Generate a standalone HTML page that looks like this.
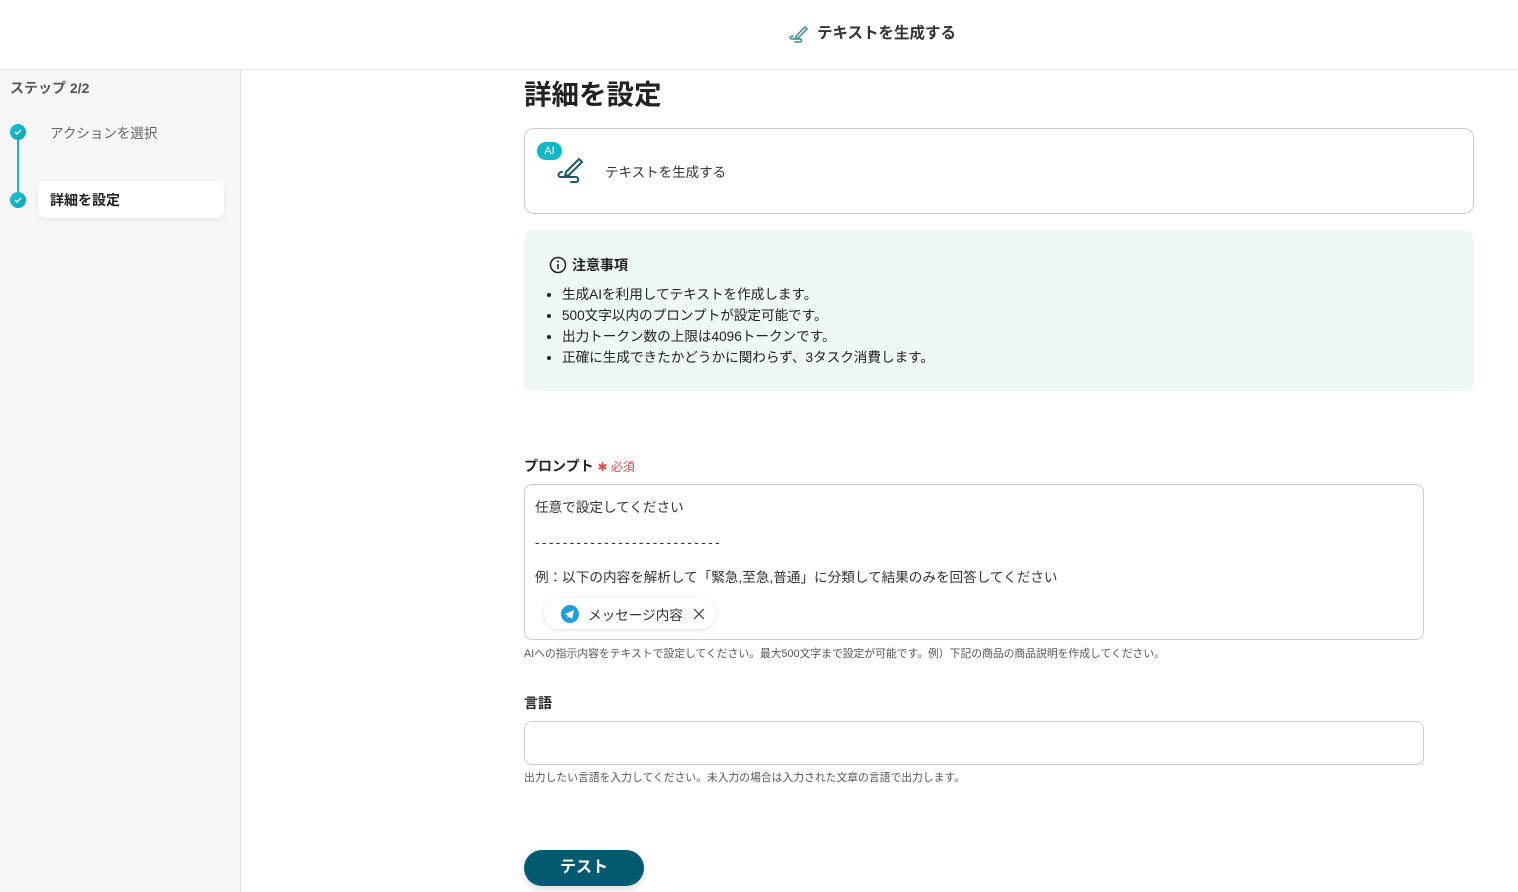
<!DOCTYPE html>
<html><head><meta charset="utf-8">
<style>
*{box-sizing:border-box;margin:0;padding:0}
body{width:1518px;height:892px;overflow:hidden;background:#fff;font-family:"Liberation Sans","Noto Sans CJK JP",sans-serif;color:#222;position:relative}
.hdr{position:absolute;left:0;top:0;width:1518px;height:70px;border-bottom:1px solid #e0e0e0;background:#fff}
.hdr .t{position:absolute;left:817px;top:21px;font-size:15.5px;font-weight:bold;color:#333}
.side{position:absolute;left:0;top:70px;width:241px;height:822px;background:#f7f7f7;border-right:1px solid #e0e0e0}
.abs{position:absolute}
.dot{position:absolute;width:16px;height:16px;border-radius:50%;background:linear-gradient(135deg,#1cc4d6,#07a5a8)}
.small{font-size:10.8px;color:#555}
</style></head><body>
<div class="hdr">
<svg class="abs" style="left:786px;top:21px" width="24" height="24" viewBox="0 0 24 24" fill="none" stroke="#3a8aa0" stroke-width="1.5" stroke-linecap="round"><path d="M10 15l9-9 2 2-9 9-3 1z"/><path d="M7 15c-3 0-4 3-1 3h8c2 0 2 3 0 3H9"/></svg>
<div class="t">テキストを生成する</div>
</div>
<div class="side">
<div class="abs" style="left:10px;top:8px;font-size:14px;font-weight:bold;color:#555">ステップ 2/2</div>
<div class="abs" style="left:17px;top:62px;width:2px;height:66px;background:#11b5c4"></div>
<div class="dot" style="left:10px;top:54px"><svg width="16" height="16"><path d="M5 8l2 2 4-4" stroke="#fff" stroke-width="1.5" fill="none"/></svg></div>
<div class="dot" style="left:10px;top:122px"><svg width="16" height="16"><path d="M5 8l2 2 4-4" stroke="#fff" stroke-width="1.5" fill="none"/></svg></div>
<div class="abs" style="left:50px;top:52px;font-size:13.5px;color:#666">アクションを選択</div>
<div class="abs" style="left:38px;top:111px;width:186px;height:37px;background:#fff;border-radius:8px;box-shadow:0 2px 6px rgba(0,0,0,.06)"></div>
<div class="abs" style="left:50px;top:120px;font-size:14px;font-weight:bold;color:#222">詳細を設定</div>
</div>
<div class="abs" style="left:524px;top:72px;font-size:27.5px;font-weight:bold;color:#222">詳細を設定</div>
<div class="abs" style="left:524px;top:128px;width:950px;height:86px;border:1px solid #ccc;border-radius:10px"></div>
<div class="abs" style="left:537px;top:142px;width:25px;height:18px;border-radius:9px;background:#12b8c8;color:#fff;font-size:11px;text-align:center;line-height:18px">AI</div>
<svg class="abs" style="left:550px;top:152px" width="40" height="40" viewBox="0 0 40 40" fill="none" stroke="#1a5a70" stroke-width="2" stroke-linecap="round"><path d="M16 20l13-13 3 3-13 13-4 1z"/><path d="M12 20c-4 0-5 5-1 5h15c3 0 3 5 0 5h-5"/></svg>
<div class="abs" style="left:605px;top:161px;font-size:13.5px;color:#333">テキストを生成する</div>
<div class="abs" style="left:524px;top:230px;width:950px;height:161px;background:#eff7f7;border-radius:10px"></div>
<svg class="abs" style="left:549px;top:256px" width="18" height="18" viewBox="0 0 18 18"><circle cx="9" cy="9" r="7.5" fill="none" stroke="#222" stroke-width="1.5"/><rect x="8.2" y="8" width="1.6" height="5" fill="#222"/><circle cx="9" cy="5.5" r="1" fill="#222"/></svg>
<div class="abs" style="left:572px;top:255px;font-size:14px;font-weight:bold">注意事項</div>
<ul class="abs" style="left:562px;top:284px;font-size:13.6px;line-height:21px;color:#222;list-style:disc">
<li>生成AIを利用してテキストを作成します。</li>
<li>500文字以内のプロンプトが設定可能です。</li>
<li>出力トークン数の上限は4096トークンです。</li>
<li>正確に生成できたかどうかに関わらず、3タスク消費します。</li>
</ul>
<div class="abs" style="left:524px;top:456px;font-size:14px;font-weight:bold">プロンプト <span style="color:#e5484d;font-weight:normal;font-size:12px">✱ 必須</span></div>
<div class="abs" style="left:524px;top:484px;width:900px;height:156px;border:1px solid #ccc;border-radius:8px"></div>
<div class="abs" style="left:535px;top:490px;font-size:13.6px;color:#333;line-height:35px">任意で設定してください<br><span style="letter-spacing:2.4px">---------------------------</span><br>例：以下の内容を解析して「緊急,至急,普通」に分類して結果のみを回答してください</div>
<div class="abs" style="left:544px;top:598px;width:172px;height:31px;border-radius:16px;background:#fff;box-shadow:0 1px 5px rgba(0,0,0,.12)"></div>
<svg class="abs" style="left:561px;top:605px" width="18" height="18" viewBox="0 0 18 18"><circle cx="9" cy="9" r="9" fill="#229ed9"/><path d="M4 9l9-4-2 9-3-2.5-1.5 1.5v-2.5z" fill="#fff"/></svg>
<div class="abs" style="left:588px;top:604px;font-size:13.6px;color:#333">メッセージ内容</div>
<svg class="abs" style="left:692px;top:607px" width="14" height="14"><path d="M2 2l10 10M12 2L2 12" stroke="#555" stroke-width="1.4"/></svg>
<div class="abs small" style="left:524px;top:645px">AIへの指示内容をテキストで設定してください。最大500文字まで設定が可能です。例）下記の商品の商品説明を作成してください。</div>
<div class="abs" style="left:524px;top:693px;font-size:14px;font-weight:bold">言語</div>
<div class="abs" style="left:524px;top:721px;width:900px;height:44px;border:1px solid #ccc;border-radius:8px"></div>
<div class="abs small" style="left:524px;top:769px">出力したい言語を入力してください。未入力の場合は入力された文章の言語で出力します。</div>
<div class="abs" style="left:524px;top:850px;width:120px;height:36px;border-radius:18px;background:#015a70;color:#fff;font-size:16px;font-weight:bold;text-align:center;line-height:36px;box-shadow:0 3px 8px rgba(0,0,0,.15)">テスト</div>
</body></html>
